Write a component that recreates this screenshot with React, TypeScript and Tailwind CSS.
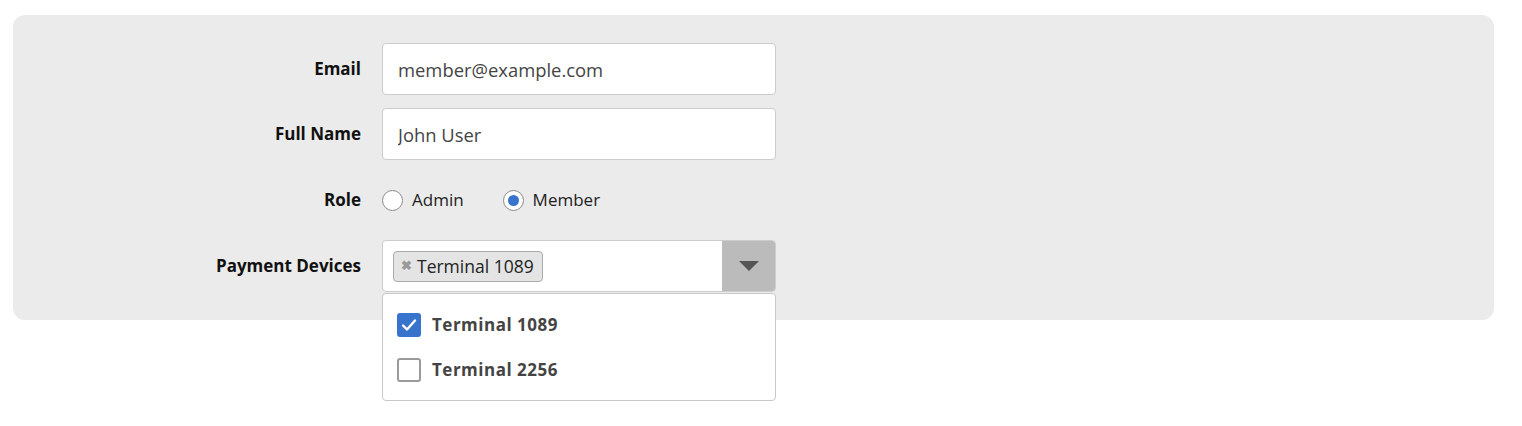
import { useState } from 'react';

const FONT = "font-['Open_Sans',sans-serif]";

const DEVICES = ['Terminal 1089', 'Terminal 2256'];

function TextField({ value }: { value: string }) {
  return (
    <input
      readOnly
      value={value}
      className="h-[52px] w-full rounded-[4px] border border-[#cccccc] bg-white px-[15px] text-[18.4px] text-[#444444] outline-none"
    />
  );
}

function Radio({ label, checked }: { label: string; checked?: boolean }) {
  return (
    <label className="flex items-center gap-[9px] text-[17px] text-[#222222]">
      <span className="flex h-[21px] w-[21px] items-center justify-center rounded-full border border-[#8a8a8a] bg-white">
        {checked ? <span className="h-[11px] w-[11px] rounded-full bg-[#3874cb]" /> : null}
      </span>
      {label}
    </label>
  );
}

function Check({ checked }: { checked: boolean }) {
  if (checked) {
    return (
      <span className="flex h-[24px] w-[24px] items-center justify-center rounded-[3px] bg-[#3874cb]">
        <svg width="18" height="18" viewBox="0 0 18 18" fill="none">
          <path d="M3 9.5l4 4 8-9" stroke="white" strokeWidth="2.4" strokeLinecap="round" strokeLinejoin="round" />
        </svg>
      </span>
    );
  }
  return <span className="h-[24px] w-[24px] rounded-[3px] border-2 border-[#9a9a9a] bg-white" />;
}

export default function App() {
  const [selected] = useState<string[]>(['Terminal 1089']);

  return (
    <div className={`${FONT} min-h-[426px] bg-white pl-[13px] pr-[28px] pt-[15px]`}>
      <div className="rounded-[12px] bg-[#ebebeb] pb-[28px] pt-[28px]">
        <div className="grid grid-cols-[348px_394px] gap-x-[21px] gap-y-[13px]">
          <div className="flex items-center justify-end text-[17px] font-bold text-[#111111]">Email</div>
          <TextField value="member@example.com" />

          <div className="flex items-center justify-end text-[17px] font-bold text-[#111111]">Full Name</div>
          <TextField value="John User" />

          <div className="flex h-[54px] items-center justify-end text-[17px] font-bold text-[#111111]">Role</div>
          <div className="flex items-center gap-[39px]">
            <Radio label="Admin" />
            <Radio label="Member" checked />
          </div>

          <div className="flex items-center justify-end text-[17px] font-bold text-[#111111]">Payment Devices</div>
          <div className="relative">
            <div className="flex h-[52px] items-stretch rounded-[4px] border border-[#cccccc] bg-white">
              <div className="flex flex-1 items-center gap-2 pl-[10px]">
                {selected.map((s) => (
                  <span
                    key={s}
                    className="flex h-[31px] items-center gap-[5px] rounded-[4px] border border-[#aaaaaa] bg-[#e4e4e4] pl-[7px] pr-[8px] text-[17.5px] text-[#222222]"
                  >
                    <span className="text-[13px] font-bold text-[#999999]">✖</span>
                    {s}
                  </span>
                ))}
              </div>
              <div className="flex w-[53px] items-center justify-center rounded-r-[3px] bg-[#bbbbbb]">
                <svg width="20" height="10" viewBox="0 0 20 10">
                  <path d="M0 0h20l-10 10z" fill="#555555" />
                </svg>
              </div>
            </div>
            <div className="absolute left-0 right-0 top-[53px] rounded-[4px] border border-[#c8c8c8] bg-white py-[8px] pl-[14px]">
              {DEVICES.map((d) => (
                <div
                  key={d}
                  className="flex h-[45px] items-center gap-[11px] text-[17px] font-bold tracking-[0.5px] text-[#444444]"
                >
                  <Check checked={selected.includes(d)} />
                  {d}
                </div>
              ))}
            </div>
          </div>
        </div>
      </div>
    </div>
  );
}
